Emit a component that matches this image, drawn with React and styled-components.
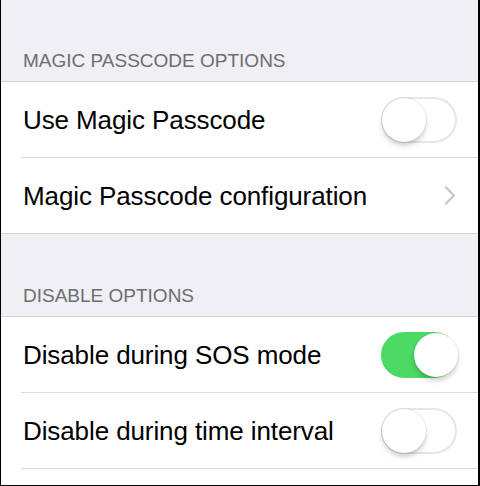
import React from "react";
import styled, { createGlobalStyle } from "styled-components";

const GlobalStyle = createGlobalStyle`
  html, body {
    margin: 0;
    padding: 0;
    background: #ffffff;
  }
  body {
    font-family: "Liberation Sans", Arial, sans-serif;
    -webkit-font-smoothing: antialiased;
  }
`;

const Screen = styled.div`
  width: 480px;
  height: 486px;
  box-sizing: border-box;
  border-left: 1px solid #000;
  border-right: 2px solid #000;
  border-bottom: 1px solid #000;
  background: #efeff4;
  display: flex;
  flex-direction: column;
  overflow: hidden;
`;

const SectionHeader = styled.div`
  height: ${(p) => p.height}px;
  flex: none;
  box-sizing: border-box;
  display: flex;
  align-items: flex-end;
  padding: 0 22px 9px;
  font-size: 19px;
  color: #6d6d72;
  text-transform: uppercase;
`;

const Group = styled.div`
  background: #ffffff;
  border-top: 1px solid #d1d1d6;
  border-bottom: ${(p) => (p.open ? "none" : "1px solid #d1d1d6")};
  flex: ${(p) => (p.open ? 1 : "none")};
`;

const Row = styled.div`
  height: 76px;
  box-sizing: border-box;
  margin-left: 20px;
  padding: 0 21px 0 2px;
  display: flex;
  align-items: center;
  justify-content: space-between;
  border-bottom: 1px solid #d9d9de;

  ${Group}:not([data-open]) &:last-child {
    border-bottom: none;
    height: 75px;
  }
`;

const Label = styled.span`
  font-size: 26px;
  color: #000;
  letter-spacing: -0.1px;
  padding-top: 2px;
`;

const Track = styled.div`
  position: relative;
  width: 76px;
  height: 46px;
  box-sizing: border-box;
  border-radius: 23px;
  background: ${(p) => (p.on ? "#4cd964" : "#ffffff")};
  border: 2px solid ${(p) => (p.on ? "#4cd964" : "#e5e5ea")};
  flex: none;
`;

const Knob = styled.div`
  position: absolute;
  top: -1px;
  left: ${(p) => (p.on ? "31px" : "-1px")};
  width: 44px;
  height: 44px;
  border-radius: 50%;
  background: #ffffff;
  box-shadow: 0 0 0 1px rgba(0, 0, 0, 0.06), 0 4px 5px rgba(0, 0, 0, 0.18);
`;

const Switch = ({ on }) => (
  <Track on={on ? 1 : 0}>
    <Knob on={on ? 1 : 0} />
  </Track>
);

const Chevron = () => (
  <svg width="12" height="19" viewBox="0 0 12 19" style={{ marginRight: 1 }}>
    <polyline
      points="2,1.5 10,9.5 2,17.5"
      fill="none"
      stroke="#c7c7cc"
      strokeWidth="2.4"
      strokeLinecap="round"
      strokeLinejoin="round"
    />
  </svg>
);

export default function App() {
  return (
    <>
      <GlobalStyle />
      <Screen>
        <SectionHeader height={81}>Magic Passcode Options</SectionHeader>
        <Group>
          <Row>
            <Label>Use Magic Passcode</Label>
            <Switch />
          </Row>
          <Row>
            <Label>Magic Passcode configuration</Label>
            <Chevron />
          </Row>
        </Group>
        <SectionHeader height={82}>Disable Options</SectionHeader>
        <Group open data-open>
          <Row>
            <Label>Disable during SOS mode</Label>
            <Switch on />
          </Row>
          <Row>
            <Label>Disable during time interval</Label>
            <Switch />
          </Row>
        </Group>
      </Screen>
    </>
  );
}
